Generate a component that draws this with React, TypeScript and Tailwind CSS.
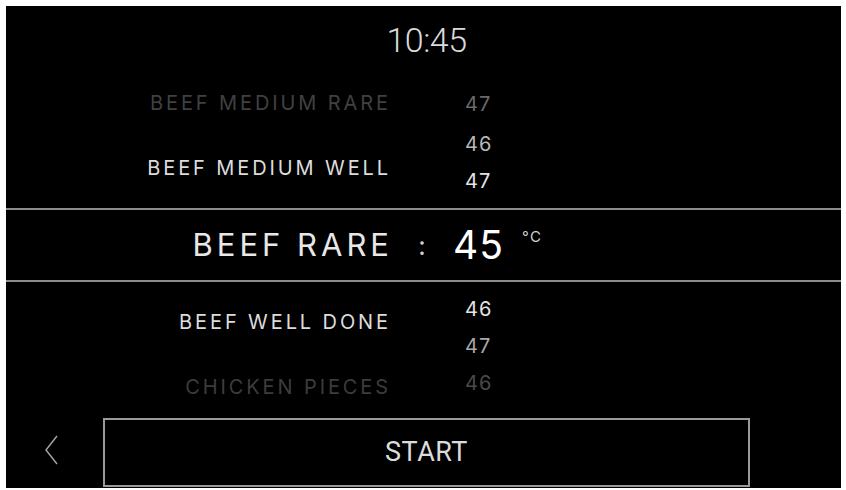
const font = { fontFamily: 'Inter, "Noto Sans", sans-serif' };

function Name({ text, className }: { text: string; className: string }) {
  return <div className={`h-[20px] leading-[20px] text-[20px] tracking-[2.9px] whitespace-nowrap ${className}`}>{text}</div>;
}

function Num({ text, className }: { text: string; className: string }) {
  return <div className={`h-[20px] leading-[20px] text-[20px] tracking-[1px] ${className}`}>{text}</div>;
}

export default function App() {
  return (
    <div className="w-[846px] h-[490px] bg-white pl-[6px] pt-[6px]" style={font}>
      <div className="w-[835px] h-[482px] bg-black flex flex-col overflow-hidden">
        {/* clock */}
        <div className="h-[79px] pt-[14px] text-center">
          <span className="ml-[6px] text-[34px] leading-[40px] font-light text-[#dadada] tracking-[-0.5px]" style={{ fontFamily: 'Roboto, sans-serif' }}>
            10:45
          </span>
        </div>

        {/* upper wheel */}
        <div className="h-[123px] flex">
          <div className="w-[385px] flex flex-col items-end pt-[8px]">
            <Name text="BEEF MEDIUM RARE" className="text-[#404040]" />
            <Name text="BEEF MEDIUM WELL" className="mt-[45px] text-[#dcdcdc]" />
          </div>
          <div className="ml-[74px] flex flex-col pt-[9px]">
            <Num text="47" className="text-[#6a6a6a]" />
            <Num text="46" className="mt-[20px] text-[#b8b8b8]" />
            <Num text="47" className="mt-[17px] text-[#e4e4e4]" />
          </div>
        </div>

        {/* selected */}
        <div className="h-[74px] border-y-2 border-[#8c8c8c] flex items-center">
          <div className="w-[387px] text-right text-[31px] tracking-[4px] text-[#e8e8e8] whitespace-nowrap">BEEF RARE</div>
          <div className="w-[58px] text-center text-[26px] text-[#cfcfcf]">:</div>
          <div className="ml-[2px] text-[39px] leading-[44px] tracking-[1px] text-white">45</div>
          <div className="ml-[18px] -mt-[16px] text-[15px] tracking-[1.5px] text-[#d0d0d0]">°C</div>
        </div>

        {/* lower wheel */}
        <div className="h-[118px] flex">
          <div className="w-[385px] flex flex-col items-end pt-[30px]">
            <Name text="BEEF WELL DONE" className="text-[#dcdcdc]" />
            <Name text="CHICKEN PIECES" className="mt-[45px] text-[#3c3c3c]" />
          </div>
          <div className="ml-[74px] flex flex-col pt-[17px]">
            <Num text="46" className="text-[#e4e4e4]" />
            <Num text="47" className="mt-[17px] text-[#a8a8a8]" />
            <Num text="46" className="mt-[17px] text-[#4a4a4a]" />
          </div>
        </div>

        {/* footer */}
        <div className="flex items-end flex-1 pb-[1px]">
          <div className="w-[97px] h-[69px] flex items-center pl-[38px] pb-[6px]">
            <svg width="14" height="30" viewBox="0 0 14 30" fill="none">
              <polyline points="13,1 2,15 13,29" stroke="#a8a8a8" strokeWidth="1.4" />
            </svg>
          </div>
          <div className="w-[647px] h-[69px] border-2 border-[#9a9a9a] flex items-center justify-center text-[27px] tracking-[0.5px] text-[#dcdcdc]" style={{ fontFamily: 'Roboto, sans-serif' }}>
            START
          </div>
        </div>
      </div>
    </div>
  );
}
